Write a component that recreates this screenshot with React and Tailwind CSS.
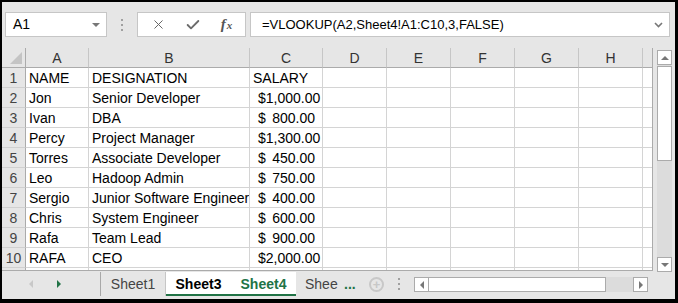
import { X, Check } from "lucide-react";

const rows = [
  ["NAME", "DESIGNATION", "SALARY", false],
  ["Jon", "Senior Developer", "1,000.00", true],
  ["Ivan", "DBA", "800.00", true],
  ["Percy", "Project Manager", "1,300.00", true],
  ["Torres", "Associate Developer", "450.00", true],
  ["Leo", "Hadoop Admin", "750.00", true],
  ["Sergio", "Junior Software Engineer", "400.00", true],
  ["Chris", "System Engineer", "600.00", true],
  ["Rafa", "Team Lead", "900.00", true],
  ["RAFA", "CEO", "2,000.00", true],
];

const letters = ["A", "B", "C", "D", "E", "F", "G", "H", ""];

function Dots() {
  return (
    <div className="flex flex-col gap-[3px] items-center">
      <span className="w-[2px] h-[2px] bg-[#a0a0a0]" />
      <span className="w-[2px] h-[2px] bg-[#a0a0a0]" />
      <span className="w-[2px] h-[2px] bg-[#a0a0a0]" />
    </div>
  );
}

export default function App() {
  return (
    <div className="w-[678px] h-[303px] bg-[#e6e6e6] border-t-2 border-l-2 border-r-[3px] border-b-4 border-black flex flex-col overflow-hidden font-['Liberation_Sans',Arial,sans-serif] text-[14px] text-black">
      {/* formula bar */}
      <div className="h-[46px] pt-[10px] flex items-start">
        <div className="ml-[3px] w-[102px] h-[25px] bg-white border border-[#c6c6c6] flex items-center justify-between pl-[7px] pr-[6px]">
          <span>A1</span>
          <span className="w-0 h-0 border-l-[4px] border-r-[4px] border-t-[4px] border-l-transparent border-r-transparent border-t-[#777]" />
        </div>
        <div className="w-[30px] h-[25px] flex items-center justify-center">
          <Dots />
        </div>
        <div className="w-[109px] h-[25px] bg-white border border-[#c6c6c6] flex items-center">
          <div className="w-[40px] flex justify-center">
            <X size={15} strokeWidth={1.6} className="text-[#666]" />
          </div>
          <div className="w-[30px] flex justify-center">
            <Check size={16} strokeWidth={2.8} className="text-[#6b6b6b]" />
          </div>
          <div className="w-[37px] flex justify-center items-baseline font-['Liberation_Serif',serif] italic text-[#555] text-[15px] font-bold">
            f<span className="text-[11px] ml-[1px]">x</span>
          </div>
        </div>
        <div className="ml-[4px] w-[420px] h-[25px] bg-white border border-[#c6c6c6] flex items-center justify-between pl-[11px] pr-[6px]">
          <span className="text-[13px]">=VLOOKUP(A2,Sheet4!A1:C10,3,FALSE)</span>
          <svg width="9" height="6" viewBox="0 0 9 6">
            <path d="M1 1 L4.5 4.5 L8 1" fill="none" stroke="#777" strokeWidth="1.6" />
          </svg>
        </div>
      </div>

      {/* sheet + vertical scroll */}
      <div className="h-[223px] flex">
        <div className="w-[651px] h-[223px] overflow-hidden border-r border-b border-[#ababab]">
          <div className="grid grid-cols-[24px_63px_161px_73px_64px_64px_64px_64px_64px_10px] auto-rows-[20px]">
            <div className="bg-[#e6e6e6] border-r border-b border-[#ababab] relative">
              <span className="absolute right-[3px] bottom-[3px] w-0 h-0 border-b-[12px] border-l-[12px] border-b-[#c4c4c4] border-l-transparent" />
            </div>
            {letters.map((l, i) => (
              <div
                key={i}
                className="bg-[#e6e6e6] border-r border-b border-r-[#c6c6c6] border-b-[#ababab] flex items-center justify-center pt-[1px] text-[#333]"
              >
                {l}
              </div>
            ))}
            {rows.concat([["", "", "", false]]).map((r, ri) => (
              <RowCells key={ri} n={ri < 10 ? ri + 1 : ""} r={r} />
            ))}
          </div>
        </div>
        <div className="ml-[4px] mt-[2px] w-[15px] h-[222px] bg-[#dcdcdc] flex flex-col">
          <div className="h-[15px] bg-white border border-[#ababab] flex items-center justify-center">
            <span className="w-0 h-0 border-l-[4px] border-r-[4px] border-b-[4px] border-l-transparent border-r-transparent border-b-[#777]" />
          </div>
          <div className="mt-[1px] h-[95px] bg-white border border-[#ababab]" />
          <div className="flex-1" />
          <div className="h-[15px] bg-white border border-[#ababab] flex items-center justify-center">
            <span className="w-0 h-0 border-l-[4px] border-r-[4px] border-t-[4px] border-l-transparent border-r-transparent border-t-[#777]" />
          </div>
        </div>
      </div>

      {/* sheet tabs */}
      <div className="h-[28px] flex items-start pt-[1px]">
        <div className="w-[98px] h-[24px] flex items-center">
          <span className="ml-[27px] w-0 h-0 border-t-[4px] border-b-[4px] border-r-[4px] border-t-transparent border-b-transparent border-r-[#c8c8c8]" />
          <span className="ml-[24px] w-0 h-0 border-t-[4px] border-b-[4px] border-l-[4px] border-t-transparent border-b-transparent border-l-[#217346]" />
        </div>
        <div className="h-[24px] w-px bg-[#a8a8a8]" />
        <div className="w-[65px] h-[24px] flex items-center justify-center text-[#444] border-r border-[#c6c6c6]">
          Sheet1
        </div>
        <div className="w-[65px] h-[24px] flex items-center justify-center bg-white font-bold border-b-2 border-[#217346] pt-[2px]">
          Sheet3
        </div>
        <div className="w-[65px] h-[24px] flex items-center justify-center bg-white font-bold text-[#217346] border-b-2 border-[#217346] pt-[2px]">
          Sheet4
        </div>
        <div className="w-[48px] h-[24px] flex items-center pl-[9px] text-[#444] whitespace-nowrap">
          Shee
        </div>
        <div className="w-[18px] h-[24px] flex items-center text-[#217346] font-bold">
          ...
        </div>
        <div className="ml-[7px] h-[24px] flex items-center">
          <div className="w-[15px] h-[15px] rounded-full border-2 border-[#c8c8c8] flex items-center justify-center text-[#c8c8c8] text-[13px] font-bold leading-none">
            +
          </div>
        </div>
        <div className="w-[30px] h-[24px] flex items-center justify-center">
          <Dots />
        </div>
        <div className="mt-[5px] w-[234px] h-[15px] bg-[#dcdcdc] flex">
          <div className="w-[15px] h-[15px] bg-white border border-[#ababab] flex items-center justify-center">
            <span className="w-0 h-0 border-t-[4px] border-b-[4px] border-r-[4px] border-t-transparent border-b-transparent border-r-[#777]" />
          </div>
          <div className="w-[177px] h-[15px] bg-white border border-l-0 border-[#ababab]" />
          <div className="flex-1" />
          <div className="w-[15px] h-[15px] bg-white border border-[#ababab] flex items-center justify-center">
            <span className="w-0 h-0 border-t-[4px] border-b-[4px] border-l-[4px] border-t-transparent border-b-transparent border-l-[#777]" />
          </div>
        </div>
      </div>
    </div>
  );
}

function RowCells({ n, r }) {
  const [name, role, amount, money] = r;
  const cell = "border-r border-b border-[#d4d4d4] bg-white flex items-center pt-[1px] whitespace-nowrap overflow-hidden";
  return (
    <>
      <div className="bg-[#e6e6e6] border-r border-b border-r-[#ababab] border-b-[#d0d0d0] flex items-center justify-center pt-[1px] text-[#444]">
        {n}
      </div>
      <div className={cell + " pl-[3px]"}>{name}</div>
      <div className={cell + " pl-[3px]"}>{role}</div>
      {money ? (
        <div className={cell + " justify-between pl-[8px] pr-[7px]"}>
          <span>$</span>
          <span>{amount}</span>
        </div>
      ) : (
        <div className={cell + " pl-[3px]"}>{amount}</div>
      )}
      <div className={cell} />
      <div className={cell} />
      <div className={cell} />
      <div className={cell} />
      <div className={cell} />
      <div className={cell + " border-r-0"} />
    </>
  );
}
